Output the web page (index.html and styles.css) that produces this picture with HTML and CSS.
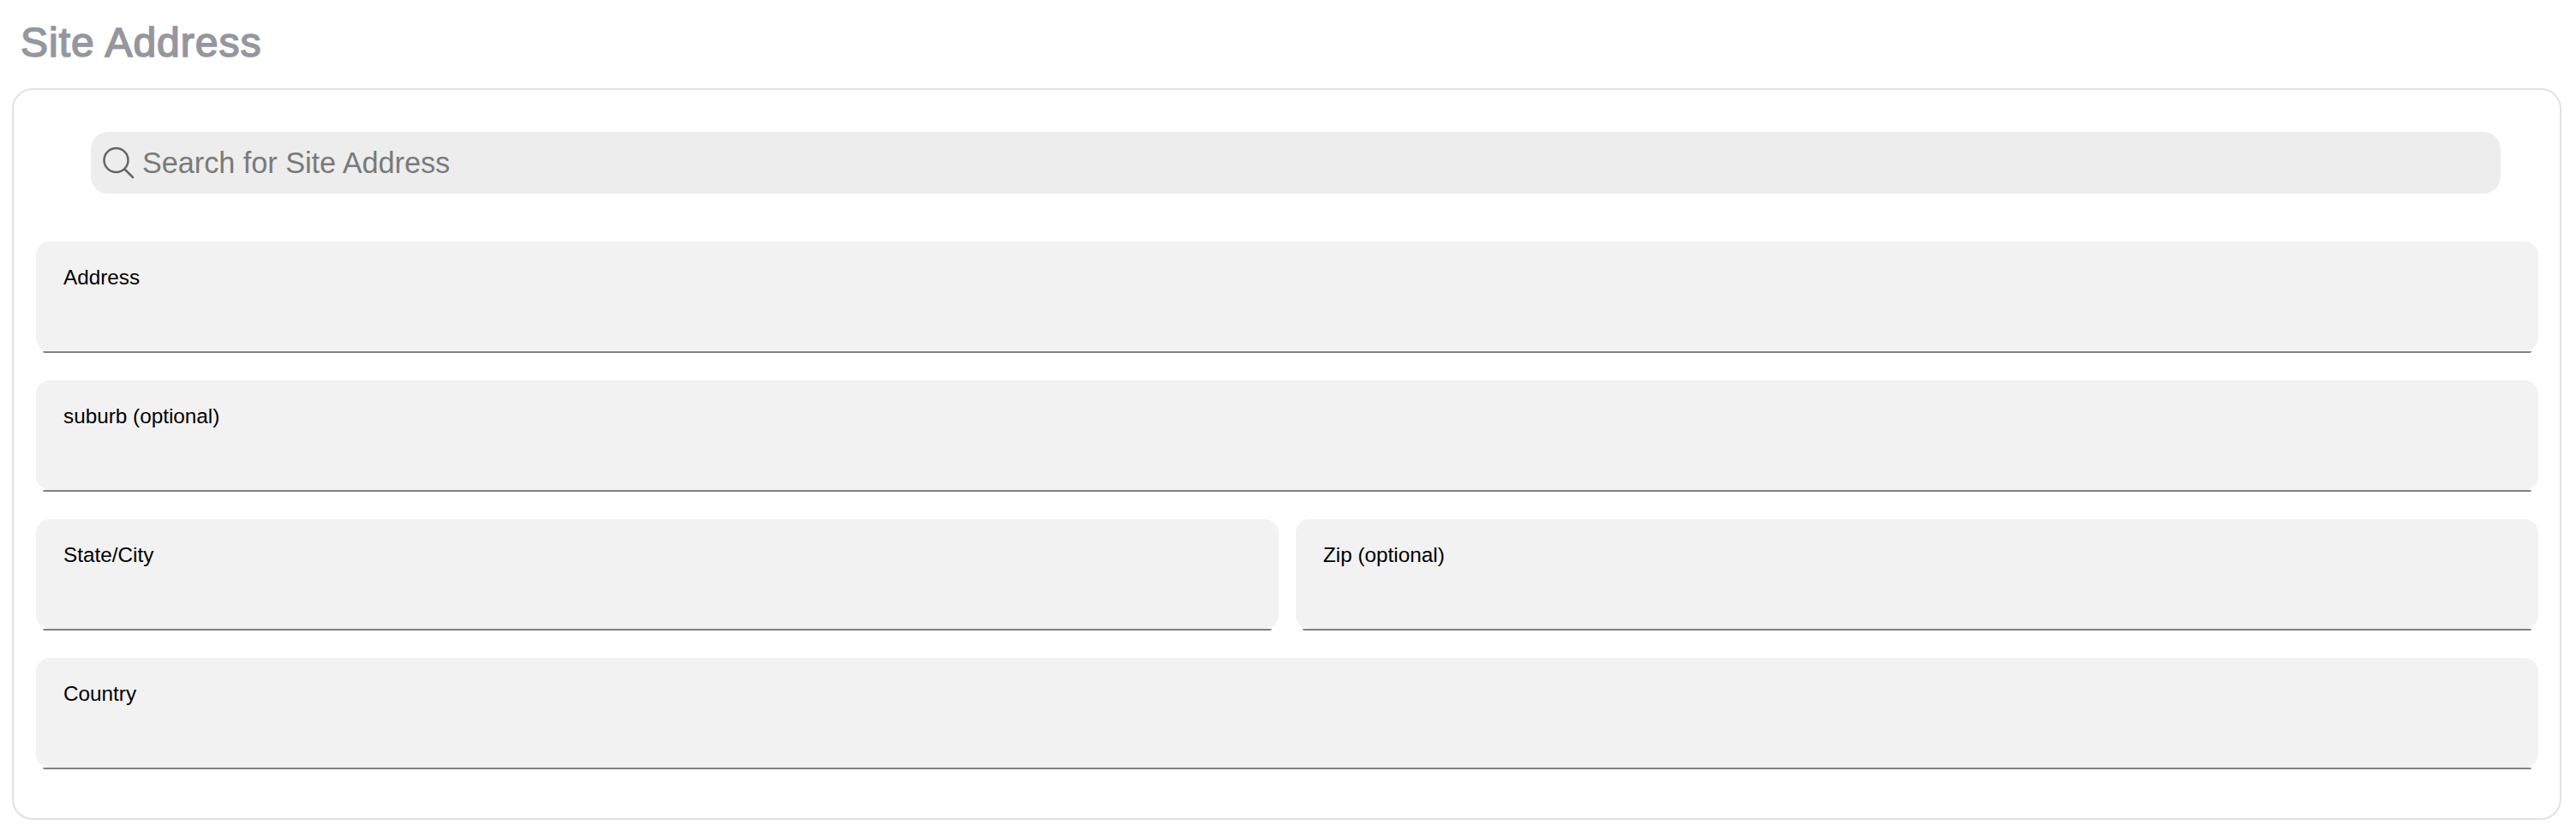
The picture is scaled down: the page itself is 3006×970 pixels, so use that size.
FILE: index.html
```html
<!DOCTYPE html>
<html lang="en">
<head>
    <meta charset="UTF-8">
    <meta name="viewport" content="width=device-width, initial-scale=1.0">
    <title>Site Address</title>
    <link rel="stylesheet" href="styles.css">
</head>
<body>
    <h1 class="title">Site Address</h1>
    <div class="card">
        <div class="search">
            <svg class="search-icon" width="40" height="40" viewBox="0 0 40 40" fill="none" stroke="#666" stroke-width="2.5" stroke-linecap="round">
                <circle cx="17.5" cy="17" r="14"/>
                <path d="M27.5 27.5L37 37"/>
            </svg>
            <input class="search-input" type="text" placeholder="Search for Site Address">
        </div>
        <div class="fields">
            <label class="field field-wide">Address</label>
            <label class="field field-wide">suburb (optional)</label>
            <label class="field">State/City</label>
            <label class="field">Zip (optional)</label>
            <label class="field field-wide">Country</label>
        </div>
    </div>
</body>
</html>
```

FILE: styles.css
```css
body {
    margin: 0;
    background-color: #fff;
    font-family: "Liberation Sans", Arial, sans-serif;
}
.title {
    margin: 0;
    padding: 23px 0 0 24px;
    height: 103px;
    box-sizing: border-box;
    font-size: 48px;
    line-height: 54px;
    font-weight: 400;
    letter-spacing: 1px;
    -webkit-text-stroke: 1.6px #96969e;
    color: #96969e;
}
.card {
    margin: 0 17px 13px 14px;
    padding: 49px 25px 59px 26px;
    border: 2px solid #dfe2e7;
    border-radius: 24px;
}
.search {
    display: flex;
    align-items: center;
    gap: 8px;
    height: 72px;
    margin: 0 44px 56px 64px;
    padding-left: 12px;
    background-color: #ededed;
    border-radius: 20px;
}
.search-icon {
    flex: none;
}
.search-input {
    flex: 1;
    border: none;
    padding: 0;
    background: none;
    font-family: inherit;
    font-size: 34.2px;
    color: #7a7a7a;
}
.search-input::placeholder {
    color: #7a7a7a;
    opacity: 1;
}
.fields {
    display: grid;
    grid-template-columns: 1fr 1fr;
    column-gap: 20px;
    row-gap: 34px;
}
.field {
    position: relative;
    height: 128px;
    box-sizing: border-box;
    padding: 28px 32px 0;
    background-color: #f2f2f2;
    border-radius: 16px;
    font-size: 24.3px;
    color: #000;
}
.field::after {
    content: "";
    position: absolute;
    left: 8px;
    right: 8px;
    bottom: -2px;
    height: 2px;
    border-radius: 0 0 2px 2px;
    background-color: #808080;
}
.field-wide {
    grid-column: 1 / -1;
}
```
